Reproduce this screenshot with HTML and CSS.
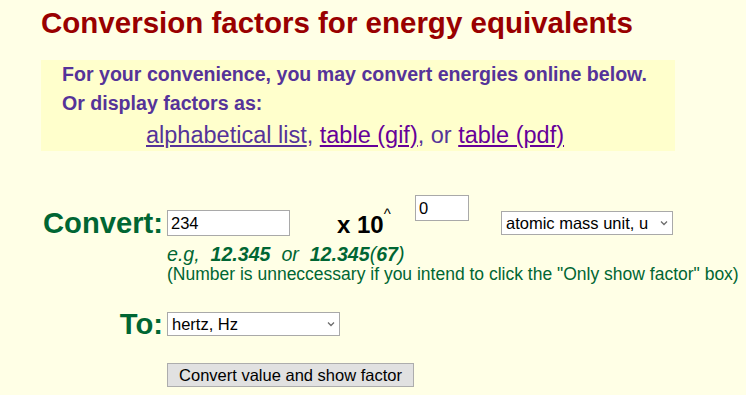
FILE: index.html
```html
<!DOCTYPE html>
<html lang="en">
<head>
  <meta charset="UTF-8">
  <title>Conversion factors for energy equivalents</title>
  <link rel="stylesheet" href="styles.css">
</head>
<body>
  <div class="page">
    <h1 class="title">Conversion factors for energy equivalents</h1>

    <div class="intro">
      <p class="intro-line">For your convenience, you may convert energies online below.</p>
      <p class="intro-line">Or display factors as:</p>
      <p class="links"><a class="link" href="#">alphabetical list</a>, <a class="link seen" href="#">table (gif)</a>, or <a class="link seen" href="#">table (pdf)</a></p>
    </div>

    <form class="converter">
      <div class="label label-convert">Convert:</div>
      <div class="field">
        <div class="inputs">
          <input class="value" type="text" value="234">
          <span class="times">x 10<sup class="caret">^</sup></span>
          <input class="exponent" type="text" value="0">
          <span class="pick pick-from">
            <select class="select">
              <option>atomic mass unit, u</option>
              <option>electron volt, eV</option>
              <option>joule, J</option>
            </select>
            <svg class="chevron" width="8" height="6" viewBox="0 0 8 6"><path d="M1 1.5 L4 4.5 L7 1.5" fill="none" stroke="#6d6d6d" stroke-width="1.3"/></svg>
          </span>
        </div>
        <div class="example-text"><i>e.g,&nbsp; <b>12.345</b>&nbsp; or&nbsp; <b>12.345</b>(<b>67</b>)</i></div>
        <div class="note">(Number is unneccessary if you intend to click the "Only show factor" box)</div>
      </div>

      <div class="label label-to">To:</div>
      <div class="field">
        <span class="pick pick-to">
          <select class="select">
            <option>hertz, Hz</option>
            <option>joule, J</option>
            <option>kelvin, K</option>
          </select>
          <svg class="chevron" width="8" height="6" viewBox="0 0 8 6"><path d="M1 1.5 L4 4.5 L7 1.5" fill="none" stroke="#6d6d6d" stroke-width="1.3"/></svg>
        </span>
      </div>

      <div class="label"></div>
      <div class="field">
        <button class="submit" type="button">Convert value and show factor</button>
      </div>
    </form>
  </div>
</body>
</html>
```

FILE: styles.css
```css
html,body{
  margin: 0;
  background: #ffffe6;
  font-family: "Liberation Sans", Arial, sans-serif;
}
.page{
  padding: 0 41px;
}
.title{
  margin: 5px 0 19px;
  font-size: 29.5px;
  line-height: 36px;
  font-weight: bold;
  color: #990000;
}
.intro{
  width: 634px;
  height: 91px;
  box-sizing: border-box;
  background: #ffffcc;
  padding-left: 21px;
  color: #553399;
}
.intro-line{
  margin: 0;
  font-size: 19.6px;
  line-height: 29px;
  font-weight: bold;
}
.links{
  margin: 3px 0 0 84px;
  font-size: 23.5px;
  line-height: 28px;
}
.link{
  color: #553399;
}
.link.seen{
  color: #660099;
}
.converter{
  margin-top: 44px;
  display: grid;
  grid-template-columns: 122px 1fr;
  column-gap: 4px;
  color: #006633;
}
.label{
  text-align: right;
  font-size: 29.2px;
  line-height: 28px;
  font-weight: bold;
  color: #006633;
}
.label-convert{
  margin-top: 14px;
}
.label-to{
  margin-top: 26px;
}
.field{
  display: flex;
  flex-direction: column;
  align-items: flex-start;
  min-width: 0;
}
.inputs{
  display: flex;
  align-items: flex-start;
  height: 41px;
}
.value,
.exponent,
.select{
  box-sizing: border-box;
  border: 1px solid #a9a9a9;
  background: #ffffff;
  font-family: "Liberation Sans", Arial, sans-serif;
  font-size: 16.5px;
  color: #000000;
  border-radius: 0;
  outline: none;
}
.value{
  width: 123px;
  height: 26px;
  margin-top: 15px;
  padding: 0 3px;
}
.times{
  display: inline-block;
  width: 78px;
  margin-left: 47px;
  margin-top: 13px;
  font-size: 24px;
  line-height: 34px;
  font-weight: bold;
  color: #000000;
}
.caret{
  font-size: 15px;
  font-weight: normal;
  line-height: 0;
  vertical-align: 14px;
}
.exponent{
  width: 54px;
  height: 26px;
  padding: 0 3px;
}
.pick{
  position: relative;
  display: inline-block;
}
.pick-from{
  margin-left: 32px;
  margin-top: 16px;
}
.pick-to{
  margin-top: 28px;
}
.select{
  appearance: none;
  -webkit-appearance: none;
  display: block;
  height: 24px;
  padding: 0 0 0 4px;
}
.pick-from .select{
  width: 172px;
}
.pick-to .select{
  width: 173px;
}
.chevron{
  position: absolute;
  top: 9px;
  right: 5px;
}
.example-text{
  margin-top: 8px;
  font-size: 19.6px;
  line-height: 20px;
}
.note{
  margin-top: 1px;
  font-size: 17.5px;
  line-height: 19px;
  white-space: nowrap;
}
.submit{
  margin-top: 25px;
  width: 247px;
  height: 24px;
  box-sizing: border-box;
  padding: 0;
  border: 1px solid #adadad;
  background: #e1e1e1;
  font-family: "Liberation Sans", Arial, sans-serif;
  font-size: 16.5px;
  color: #000000;
  border-radius: 0;
}
```
